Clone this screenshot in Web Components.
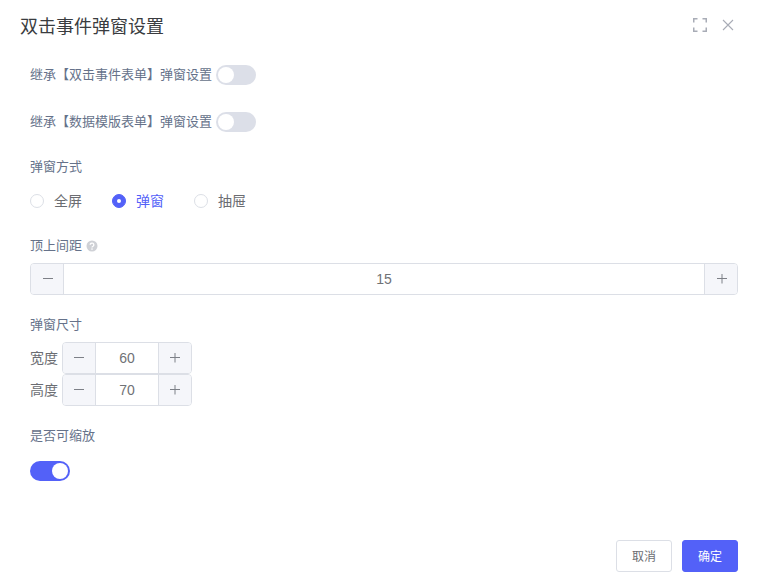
<!DOCTYPE html>
<html lang="zh">
<head>
<meta charset="utf-8">
<title>双击事件弹窗设置</title>
<style>
  html, body { margin: 0; height: 100%; background: #fff; }
  body { font-family: "Noto Sans CJK SC", "Liberation Sans", sans-serif; }
</style>
</head>
<body>
<template id="tpl-dialog">
  <style>
    :host { display: flex; flex-direction: column; height: 586px; box-sizing: border-box; color: #303133; }
    header { display: flex; justify-content: space-between; align-items: center; height: 26px; padding: 12px 29px 0 20px; }
    h1 { margin: 0; font-size: 18px; font-weight: 400; line-height: 26px; color: #3a3c40; }
    .tools { display: flex; gap: 15px; align-items: center; }
    svg { display: block; }
    main { flex: 1; padding: 0 25px 0 30px; display: flex; flex-direction: column; }
    footer { display: flex; justify-content: flex-end; gap: 10px; padding: 0 25px 14px 0; }
  </style>
  <header>
    <h1><slot name="title"></slot></h1>
    <div class="tools">
      <svg width="14" height="14" viewBox="0 0 14 14" fill="none" stroke="#a8acb6" stroke-width="1.5"><path d="M.75 4.5V.75H4.5M9.5.75h3.75V4.5M13.25 9.5v3.75H9.5M4.5 13.25H.75V9.5"/></svg>
      <svg width="12" height="12" viewBox="0 0 12 12" fill="none" stroke="#a8acb6" stroke-width="1.1"><path d="M1 1l10 10M11 1L1 11"/></svg>
    </div>
  </header>
  <main><slot></slot></main>
  <footer><slot name="footer"></slot></footer>
</template>

<template id="tpl-switch">
  <style>
    :host { display: inline-block; width: 40px; height: 20px; border-radius: 10px; background: #dcdfe8; position: relative; flex: none; }
    :host([on]) { background: #5361f8; }
    i { position: absolute; top: 2px; left: 2px; width: 16px; height: 16px; border-radius: 50%; background: #fff; }
    :host([on]) i { left: 22px; }
  </style>
  <i></i>
</template>

<template id="tpl-row">
  <style>
    :host { display: flex; align-items: center; gap: 4px; min-height: 20px; font-size: 13px; color: #66728a; }
    .t { line-height: 18px; margin-bottom: 2px; }
  </style>
  <span class="t"><slot></slot></span><slot name="after"></slot>
</template>

<template id="tpl-radio">
  <style>
    :host { display: inline-flex; align-items: center; font-size: 14px; color: #6b6d72; }
    i { width: 12px; height: 12px; border: 1px solid #dcdfe6; border-radius: 50%; margin-right: 10px; background: #fff; position: relative; flex: none; }
    span { line-height: 18px; margin-bottom: 2px; }
    :host([checked]) { color: #5361f8; }
    :host([checked]) i { background: #5361f8; border-color: #5361f8; }
    :host([checked]) i::after { content: ""; position: absolute; left: 4px; top: 4px; width: 4px; height: 4px; border-radius: 50%; background: #fff; }
  </style>
  <i></i><span><slot></slot></span>
</template>

<template id="tpl-number">
  <style>
    :host { display: flex; box-sizing: border-box; height: 32px; border: 1px solid #dcdfe6; border-radius: 4px; overflow: hidden; font: 14px/30px "Liberation Sans", Arial, sans-serif; color: #707276; background: #fff; }
    :host([small]) svg { margin-left: 0; }
    .btn { width: 32px; flex: none; background: #f5f6fa; display: flex; align-items: center; justify-content: center; }
    .dec { border-right: 1px solid #dcdfe6; }
    .inc { border-left: 1px solid #dcdfe6; }
    .val { flex: 1; text-align: center; }
    svg { display: block; margin-left: 2px; }
  </style>
  <div class="btn dec"><svg width="10" height="10" viewBox="0 0 10 10" stroke="#7d8087" stroke-width="1"><path d="M0 4.5h10"/></svg></div>
  <div class="val"><slot></slot></div>
  <div class="btn inc"><svg width="10" height="10" viewBox="0 0 10 10" stroke="#7d8087" stroke-width="1"><path d="M0 4.5h10M5 -.5v10"/></svg></div>
</template>

<template id="tpl-button">
  <style>
    :host { display: inline-flex; box-sizing: border-box; align-items: center; justify-content: center; width: 56px; height: 32px; padding-bottom: 2px; border: 1px solid #dcdfe6; border-radius: 3px; font-size: 12px; color: #6b6d72; background: #fff; }
    :host([primary]) { background: #5361f8; border-color: #5361f8; color: #fff; }
  </style>
  <slot></slot>
</template>

<script>
function define(name, tpl) {
  customElements.define(name, class extends HTMLElement {
    connectedCallback() {
      if (this.shadowRoot) return;
      this.attachShadow({ mode: 'open' });
      this.shadowRoot.appendChild(document.getElementById(tpl).content.cloneNode(true));
    }
  });
}
define('x-dialog', 'tpl-dialog');
define('x-switch', 'tpl-switch');
define('x-row', 'tpl-row');
define('x-radio', 'tpl-radio');
define('x-number', 'tpl-number');
define('x-button', 'tpl-button');
</script>

<x-dialog>
  <span slot="title">双击事件弹窗设置</span>

  <x-row style="margin-top:27px">继承【双击事件表单】弹窗设置<x-switch slot="after"></x-switch></x-row>
  <x-row style="margin-top:27px">继承【数据模版表单】弹窗设置<x-switch slot="after"></x-switch></x-row>

  <x-row style="margin-top:25px">弹窗方式</x-row>
  <div style="display:flex;gap:30px;margin-top:14px">
    <x-radio>全屏</x-radio>
    <x-radio checked>弹窗</x-radio>
    <x-radio>抽屉</x-radio>
  </div>

  <x-row style="margin-top:25px">顶上间距
    <svg slot="after" width="12" height="12" viewBox="0 0 12 12" style="display:block">
      <circle cx="6" cy="6" r="5.5" fill="#cfd1d6"/>
      <path d="M4.2 4.8a1.8 1.7 0 1 1 2.8 1.4c-.7.4-1 .6-1 1.2" fill="none" stroke="#fff" stroke-width="1.3"/>
      <circle cx="6" cy="9.1" r=".8" fill="#fff"/>
    </svg>
  </x-row>
  <x-number style="margin-top:7px">15</x-number>

  <x-row style="margin-top:20px">弹窗尺寸</x-row>
  <x-row style="margin-top:7px;font-size:14px;color:#6b6d72">宽度<x-number small slot="after" style="width:130px">60</x-number></x-row>
  <x-row style="font-size:14px;color:#6b6d72">高度<x-number small slot="after" style="width:130px">70</x-number></x-row>

  <x-row style="margin-top:20px">是否可缩放</x-row>
  <div style="display:flex;margin-top:15px"><x-switch on></x-switch></div>

  <x-button slot="footer">取消</x-button>
  <x-button slot="footer" primary>确定</x-button>
</x-dialog>
</body>
</html>
